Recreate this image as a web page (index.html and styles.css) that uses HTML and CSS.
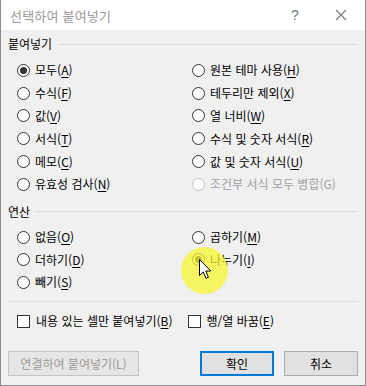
FILE: index.html
```html
<!DOCTYPE html>
<html lang="ko">
<head>
  <meta charset="UTF-8" />
  <title>선택하여 붙여넣기</title>
  <link rel="stylesheet" href="styles.css">
</head>
<body>
  <div class="dialog">
    <div class="titlebar">
      <div class="title">선택하여 붙여넣기</div>
      <div class="title-btn help">?</div>
      <div class="title-btn close">
        <svg width="12" height="12" viewBox="0 0 12 12"><path d="M1 1 L11 11 M11 1 L1 11" stroke="#777" stroke-width="1.1" fill="none"/></svg>
      </div>
    </div>

    <div class="body">
      <div class="group-head"><span>붙여넣기</span><div class="line"></div></div>
      <div class="options paste">
        <label class="opt"><span class="radio on"></span>모두(<u>A</u>)</label>
        <label class="opt"><span class="radio"></span>원본 테마 사용(<u>H</u>)</label>
        <label class="opt"><span class="radio"></span>수식(<u>F</u>)</label>
        <label class="opt"><span class="radio"></span>테두리만 제외(<u>X</u>)</label>
        <label class="opt"><span class="radio"></span>값(<u>V</u>)</label>
        <label class="opt"><span class="radio"></span>열 너비(<u>W</u>)</label>
        <label class="opt"><span class="radio"></span>서식(<u>T</u>)</label>
        <label class="opt"><span class="radio"></span>수식 및 숫자 서식(<u>R</u>)</label>
        <label class="opt"><span class="radio"></span>메모(<u>C</u>)</label>
        <label class="opt"><span class="radio"></span>값 및 숫자 서식(<u>U</u>)</label>
        <label class="opt"><span class="radio"></span>유효성 검사(<u>N</u>)</label>
        <label class="opt disabled"><span class="radio"></span>조건부 서식 모두 병합(G)</label>
      </div>

      <div class="group-head op"><span>연산</span><div class="line"></div></div>
      <div class="options ops">
        <label class="opt"><span class="radio"></span>없음(<u>O</u>)</label>
        <label class="opt"><span class="radio"></span>곱하기(<u>M</u>)</label>
        <label class="opt"><span class="radio"></span>더하기(<u>D</u>)</label>
        <label class="opt"><span class="radio on"></span>나누기(<u>I</u>)</label>
        <label class="opt"><span class="radio"></span>빼기(<u>S</u>)</label>
      </div>

      <div class="sep"></div>

      <div class="checks">
        <label class="opt"><span class="check"></span>내용 있는 셀만 붙여넣기(<u>B</u>)</label>
        <label class="opt"><span class="check"></span>행/열 바꿈(<u>E</u>)</label>
      </div>

      <div class="buttons">
        <button class="btn link" disabled>연결하여 붙여넣기(L)</button>
        <div class="spacer"></div>
        <button class="btn default">확인</button>
        <button class="btn">취소</button>
      </div>
    </div>

    <div class="click-mark"></div>
    <svg class="cursor" width="13" height="21" viewBox="0 0 13 21">
      <path d="M0.5 0.5 L0.5 16.5 L4.3 12.9 L7 19.3 L9.4 18.3 L6.8 12 L11.8 12 Z" fill="#fff" stroke="#000" stroke-width="1" stroke-linejoin="round"/>
    </svg>
  </div>
</body>
</html>
```

FILE: styles.css
```css
body {
  margin: 0;
  background: #217346;
  font-family: "Noto Sans CJK KR", "Noto Sans", sans-serif;
  font-size: 12px;
  color: #000;
}

.dialog {
  position: relative;
  width: 364px;
  height: 385px;
  border: 1px solid #8c8c8c;
  border-top: none;
  background: #f0f0f0;
  overflow: hidden;
}

.titlebar {
  display: flex;
  align-items: center;
  height: 30px;
  background: #fff;
}

.title {
  flex: 1;
  padding-left: 9px;
  font-size: 13px;
  color: #999;
  letter-spacing: 0.2px;
}

.title-btn {
  display: flex;
  align-items: center;
  justify-content: center;
  color: #777;
  font-family: "Liberation Sans", sans-serif;
  font-size: 14px;
}

.help {
  width: 20px;
  margin-right: 26px;
}

.close {
  width: 20px;
  margin-right: 14px;
}

.body {
  padding: 4px 7px 0 7px;
}

.group-head {
  display: flex;
  align-items: center;
  height: 20px;
  line-height: 20px;
}

.group-head .line {
  flex: 1;
  height: 1px;
  background: #dcdcdc;
  margin-left: 6px;
}

.options {
  display: grid;
  grid-template-columns: 175px 1fr;
  grid-auto-rows: 22.8px;
  padding-left: 9px;
}

.paste {
  margin-top: 5px;
}

.group-head.op {
  margin-top: 6px;
}

.ops {
  margin-top: 4px;
  grid-auto-rows: 22.5px;
}

.opt {
  display: flex;
  align-items: center;
  white-space: nowrap;
  line-height: 16px;
}

.opt u {
  text-underline-offset: 2px;
}

.radio {
  width: 11px;
  height: 11px;
  border: 1px solid #333;
  border-radius: 50%;
  background: #fff;
  margin-right: 5px;
  display: flex;
  align-items: center;
  justify-content: center;
}

.radio.on::after {
  content: "";
  width: 7px;
  height: 7px;
  border-radius: 50%;
  background: #333;
}

.opt.disabled {
  color: #a0a0a0;
}

.opt.disabled .radio {
  border-color: #c2c2c2;
}

.sep {
  height: 1px;
  background: #dcdcdc;
  margin-top: 8px;
}

.checks {
  display: flex;
  gap: 15px;
  height: 20px;
  margin-top: 9px;
  padding-left: 9px;
}

.check {
  width: 11px;
  height: 11px;
  border: 1px solid #333;
  background: #fff;
  margin-right: 6px;
}

.buttons {
  display: flex;
  gap: 10px;
  margin-top: 20px;
}

.spacer {
  flex: 1;
}

.btn {
  height: 25px;
  width: 74px;
  border: 1px solid #adadad;
  background: #e1e1e1;
  font-family: "Noto Sans CJK KR", "Noto Sans", sans-serif;
  font-size: 12px;
  color: #000;
  padding: 0;
}

.btn.link {
  width: 131px;
  border-color: #c4c4c4;
  background: #e6e6e6;
  color: #9a9a9a;
}

.btn.default {
  border: 2px solid #0078d7;
}

.click-mark {
  position: absolute;
  left: 180px;
  top: 247px;
  width: 47px;
  height: 47px;
  border-radius: 50%;
  background: rgba(246, 246, 40, 0.72);
}

.cursor {
  position: absolute;
  left: 198px;
  top: 259px;
}
```
